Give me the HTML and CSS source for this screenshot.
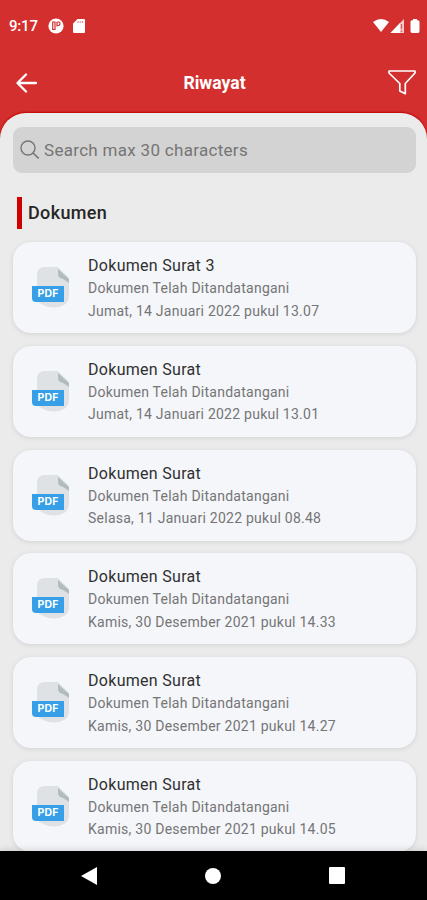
FILE: index.html
```html
<!DOCTYPE html>
<html lang="id">
<head>
  <meta charset="UTF-8">
  <meta name="viewport" content="width=device-width, initial-scale=1">
  <title>Riwayat</title>
  <link rel="stylesheet" href="styles.css">
</head>
<body>

  <!-- shared shape for the document rows -->
  <svg width="0" height="0" class="defs">
    <symbol id="pdf" viewBox="0 0 38 42">
      <path d="M13 0H26L37 11V29Q37 35 32 38Q22 43 11 38Q5 35 5 30V8Q5 0 13 0Z" fill="#dfe2e4"/>
      <path d="M26 2L37 12V16L31 12Q26 11 26 7Z" fill="#b2bbc0"/>
      <path d="M0 19H32V35H4Q0 35 0 31Z" fill="#369fe8"/>
    </symbol>
  </svg>

  <header>
    <div class="status-bar">
      <span class="time">9:17</span>
      <svg class="app-icon" width="16" height="16" viewBox="0 0 16 16">
        <circle cx="8" cy="8" r="7.6" fill="#fff"/>
        <path d="M4.7 4V11.5H7V4ZM9 4V8.5M9 4H10.5Q12 4 12 5.7T10.5 7.5H9" fill="none" stroke="#d32f2f" stroke-width="1.2"/>
      </svg>
      <svg class="sd-icon" width="12" height="14" viewBox="0 0 12 14">
        <path d="M4.5 0H11Q12 0 12 1V13Q12 14 11 14H1Q0 14 0 13V4.5Z" fill="#fff"/>
        <path d="M5 2V4M7.2 2V4M9.4 2V4" stroke="#e58080" stroke-width="1"/>
      </svg>
      <svg class="signals" width="48" height="16" viewBox="0 0 48 16">
        <path d="M0 4Q8 -2 16 4L8 14Z" fill="#fff"/>
        <path d="M17.5 15L31 1V15Z" fill="#f6c9c9"/>
        <path d="M17.5 15L27 5V15Z" fill="#fff"/>
        <path d="M28.5 6V11M28.5 12.5V14" stroke="#d96060" stroke-width="1.3"/>
        <path d="M40 1H44V2.3H45Q46.5 2.3 46.5 4V13Q46.5 15 45 15H39Q37.5 15 37.5 13V4Q37.5 2.3 39 2.3H40Z" fill="#fff"/>
      </svg>
    </div>
    <div class="app-bar">
      <svg class="back" width="22" height="20" viewBox="0 0 22 20">
        <path d="M10 1.5L1.5 10L10 18.5M2 10H20" fill="none" stroke="#fff" stroke-width="2.3" stroke-linecap="round" stroke-linejoin="round"/>
      </svg>
      <h1>Riwayat</h1>
      <svg class="filter" width="28" height="25" viewBox="0 0 28 25">
        <path d="M1 1H27V3L17.3 13.5V23.7L11.8 21V13.5L1 3Z" fill="none" stroke="#fff" stroke-width="1.7" stroke-linejoin="round"/>
      </svg>
    </div>
  </header>

  <main>
    <div class="search">
      <svg width="20" height="20" viewBox="0 0 20 20">
        <circle cx="8" cy="8" r="7" fill="none" stroke="#757575" stroke-width="1.4"/>
        <path d="M13 13L18.7 18.3" stroke="#757575" stroke-width="1.6"/>
      </svg>
      <span>Search max 30 characters</span>
    </div>

    <h2>Dokumen</h2>

    <div class="list">
      <div class="card">
        <div class="pdf-icon"><svg><use href="#pdf"/></svg><span>PDF</span></div>
        <div>
          <h3>Dokumen Surat 3</h3>
          <p>Dokumen Telah Ditandatangani</p>
          <p class="date">Jumat, 14 Januari 2022 pukul 13.07</p>
        </div>
      </div>
      <div class="card">
        <div class="pdf-icon"><svg><use href="#pdf"/></svg><span>PDF</span></div>
        <div>
          <h3>Dokumen Surat</h3>
          <p>Dokumen Telah Ditandatangani</p>
          <p class="date">Jumat, 14 Januari 2022 pukul 13.01</p>
        </div>
      </div>
      <div class="card">
        <div class="pdf-icon"><svg><use href="#pdf"/></svg><span>PDF</span></div>
        <div>
          <h3>Dokumen Surat</h3>
          <p>Dokumen Telah Ditandatangani</p>
          <p class="date">Selasa, 11 Januari 2022 pukul 08.48</p>
        </div>
      </div>
      <div class="card">
        <div class="pdf-icon"><svg><use href="#pdf"/></svg><span>PDF</span></div>
        <div>
          <h3>Dokumen Surat</h3>
          <p>Dokumen Telah Ditandatangani</p>
          <p class="date">Kamis, 30 Desember 2021 pukul 14.33</p>
        </div>
      </div>
      <div class="card">
        <div class="pdf-icon"><svg><use href="#pdf"/></svg><span>PDF</span></div>
        <div>
          <h3>Dokumen Surat</h3>
          <p>Dokumen Telah Ditandatangani</p>
          <p class="date">Kamis, 30 Desember 2021 pukul 14.27</p>
        </div>
      </div>
      <div class="card">
        <div class="pdf-icon"><svg><use href="#pdf"/></svg><span>PDF</span></div>
        <div>
          <h3>Dokumen Surat</h3>
          <p>Dokumen Telah Ditandatangani</p>
          <p class="date">Kamis, 30 Desember 2021 pukul 14.05</p>
        </div>
      </div>
    </div>
  </main>

  <nav>
    <svg width="16" height="18" viewBox="0 0 16 18"><path d="M0 9L16 0V18Z" fill="#fff"/></svg>
    <svg width="16" height="16" viewBox="0 0 16 16"><circle cx="8" cy="8" r="8" fill="#fff"/></svg>
    <svg width="16" height="17" viewBox="0 0 16 17"><rect width="16" height="17" rx="1" fill="#fff"/></svg>
  </nav>

</body>
</html>
```
FILE: styles.css
```css
* {
  box-sizing: border-box;
}

body {
  font-family: Roboto, "Liberation Sans", sans-serif;
  background: #d32f2f;
  margin: 0;
  height: 900px;
  display: flex;
  flex-direction: column;
  overflow: hidden;
}

h1, h2, h3, p {
  margin: 0;
}

svg {
  display: block;
  flex-shrink: 0;
}

.defs {
  position: absolute;
}

header {
  height: 113px;
  flex-shrink: 0;
  color: white;
}

.status-bar {
  display: flex;
  align-items: center;
  height: 52px;
  padding: 0 10px 0 9px;
}

.time {
  width: 39px;
  font-size: 15px;
  font-weight: 500;
  letter-spacing: -0.2px;
}

.sd-icon {
  margin-left: 9px;
}

.signals {
  margin-left: auto;
  margin-right: -4px;
}

.app-bar {
  display: flex;
  align-items: center;
  justify-content: space-between;
  height: 61px;
  padding: 0 11px 0 16px;
}

h1 {
  font-size: 17.6px;
  font-weight: 700;
  margin-left: 3px;
}

main {
  flex: 1;
  min-height: 0;
  overflow: hidden;
  background: #ebebeb;
  border-radius: 26px 26px 0 0;
  padding: 14px 11px 0 13px;
  box-shadow: 0 -1px 2px #c40000;
}

.search {
  display: flex;
  align-items: center;
  gap: 4px;
  height: 46px;
  padding-left: 7px;
  border-radius: 9px;
  background: #d3d3d3;
  color: #757575;
  font-size: 17px;
  letter-spacing: 0.3px;
}

h2 {
  height: 32px;
  line-height: 32px;
  margin: 24px 0 13px 4px;
  padding-left: 6px;
  border-left: 5px solid #d00000;
  color: #262626;
  font-size: 18px;
  font-weight: 500;
  letter-spacing: 0.35px;
}

.list {
  display: flex;
  flex-direction: column;
  gap: 12.8px;
}

.card {
  display: flex;
  flex-shrink: 0;
  height: 91px;
  padding: 13px 19px;
  border-radius: 18px;
  background: #f4f6fa;
  box-shadow: 0 1px 5px rgba(0, 0, 0, 0.11);
}

.pdf-icon {
  position: relative;
  width: 38px;
  height: 42px;
  margin: 12px 18px 0 0;
}

.pdf-icon svg {
  width: 38px;
  height: 42px;
}

.pdf-icon span {
  position: absolute;
  left: 0;
  top: 19px;
  width: 32px;
  line-height: 16px;
  text-align: center;
  color: white;
  font-family: Inter, sans-serif;
  font-size: 10.5px;
  font-weight: 700;
  letter-spacing: 0.2px;
}

h3 {
  color: #303030;
  font-size: 16px;
  font-weight: 400;
  line-height: 22px;
  letter-spacing: 0.3px;
}

p {
  color: #757575;
  font-size: 14px;
  line-height: 22.5px;
  letter-spacing: 0.25px;
}

nav {
  display: flex;
  align-items: center;
  justify-content: space-between;
  height: 49px;
  flex-shrink: 0;
  padding: 0 82px 0 81px;
  background: #000;
  z-index: 1;
  box-shadow: 0 -1px 7px rgba(0, 0, 0, 0.14);
}
```
